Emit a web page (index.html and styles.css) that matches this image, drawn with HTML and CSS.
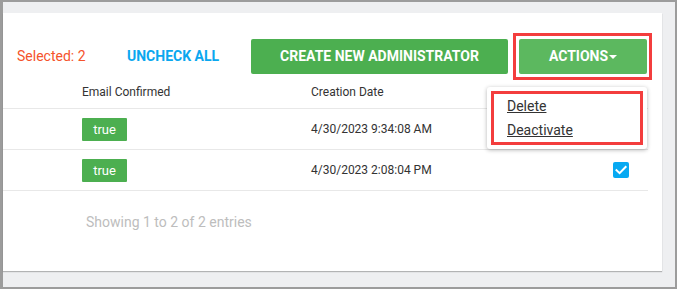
FILE: index.html
```html
<!DOCTYPE html>
<html>
<head>
<meta charset="utf-8">
<link rel="stylesheet" href="styles.css">
</head>
<body>
<div class="frame">
  <div class="card">
    <div class="toolbar">
      <span class="selected">Selected: 2</span>
      <a class="uncheck">UNCHECK ALL</a>
      <button class="btn btn-create">CREATE NEW ADMINISTRATOR</button>
      <div class="actions-wrap">
        <button class="btn btn-actions">ACTIONS<span class="caret"></span></button>
        <div class="menu">
          <div class="menu-inner">
            <a class="menu-item">Delete</a>
            <a class="menu-item">Deactivate</a>
          </div>
        </div>
      </div>
    </div>
    <div class="table">
      <div class="row head">
        <div class="cell"></div>
        <div class="cell">Email Confirmed</div>
        <div class="cell">Creation Date</div>
        <div class="cell"></div>
      </div>
      <div class="row">
        <div class="cell"></div>
        <div class="cell"><span class="badge">true</span></div>
        <div class="cell">4/30/2023 9:34:08 AM</div>
        <div class="cell"></div>
      </div>
      <div class="row">
        <div class="cell"></div>
        <div class="cell"><span class="badge">true</span></div>
        <div class="cell">4/30/2023 2:08:04 PM</div>
        <div class="cell"><span class="check"><svg width="16" height="16" viewBox="0 0 16 16"><path d="M3.5 8.2 L6.6 11.2 L12.6 5" fill="none" stroke="#fff" stroke-width="2" stroke-linecap="square"/></svg></span></div>
      </div>
    </div>
    <div class="info">Showing 1 to 2 of 2 entries</div>
  </div>
</div>
</body>
</html>
```
FILE: styles.css
```css
* { box-sizing: border-box; }
html, body { margin: 0; padding: 0; }
body {
  font-family: Roboto, "Liberation Sans", sans-serif;
  font-size: 14px;
  color: #333;
}
.frame {
  width: 677px;
  height: 289px;
  background: #eeeff1;
  border: 2px solid #9c9c9c;
  border-left-width: 3px;
  padding: 11px 13px 0 0;
}
.card {
  background: #fff;
  height: 258px;
  box-shadow: 0 1px 1px rgba(0,0,0,0.25);
  display: flex;
  flex-direction: column;
}
.toolbar {
  display: flex;
  align-items: center;
  margin-top: 19px;
  height: 48px;
  padding-left: 14px;
}
.selected {
  color: #f5532b;
  width: 110px;
}
.uncheck {
  color: #0aa7ef;
  font-weight: 700;
  width: 124px;
}
.btn {
  font-family: Roboto, "Liberation Sans", sans-serif;
  font-size: 14px;
  font-weight: 700;
  color: #fff;
  border: 0;
  border-radius: 2px;
  height: 35px;
  padding: 0;
  display: flex;
  align-items: center;
  justify-content: center;
}
.btn-create {
  background: #4caf50;
  width: 257px;
}
.actions-wrap {
  position: relative;
  margin-left: 5px;
  border: 3px solid #f33d3d;
  padding: 3px 2px 3px 3px;
}
.btn-actions {
  background: #5cb85f;
  width: 128px;
}
.caret {
  display: inline-block;
  width: 0;
  height: 0;
  border-left: 4px solid transparent;
  border-right: 4px solid transparent;
  border-top: 4px solid #fff;
  margin-left: 1px;
  margin-top: 1px;
}
.menu {
  position: absolute;
  left: -29px;
  top: 51px;
  width: 160px;
  height: 62px;
  background: #fff;
  box-shadow: 0 1px 4px rgba(0,0,0,0.3);
  border-radius: 3px;
  padding: 4px;
  z-index: 2;
}
.menu-inner {
  border: 3px solid #f33d3d;
  height: 54px;
  padding: 0 0 0 13px;
  display: flex;
  flex-direction: column;
}
.menu-item {
  color: #333;
  text-decoration: underline;
  line-height: 24px;
  height: 24px;
}
.table {
  margin-right: 14px;
}
.row {
  display: grid;
  grid-template-columns: 79px 229px 302px 1fr;
  height: 41px;
  align-items: center;
  border-bottom: 1px solid #e8e8e8;
  font-size: 12px;
}
.row.head {
  height: 29px;
  padding-bottom: 4px;
}
.badge {
  display: inline-block;
  background: #4caf50;
  color: #fff;
  font-size: 13px;
  width: 45px;
  height: 23px;
  line-height: 23px;
  text-align: center;
  border-radius: 1px;
}
.check {
  display: block;
  width: 16px;
  height: 16px;
  background: #07a9f2;
  border-radius: 2px;
}
.check svg { display: block; }
.info {
  color: #bdbdbd;
  padding-left: 83px;
  margin-top: 23px;
}
```
